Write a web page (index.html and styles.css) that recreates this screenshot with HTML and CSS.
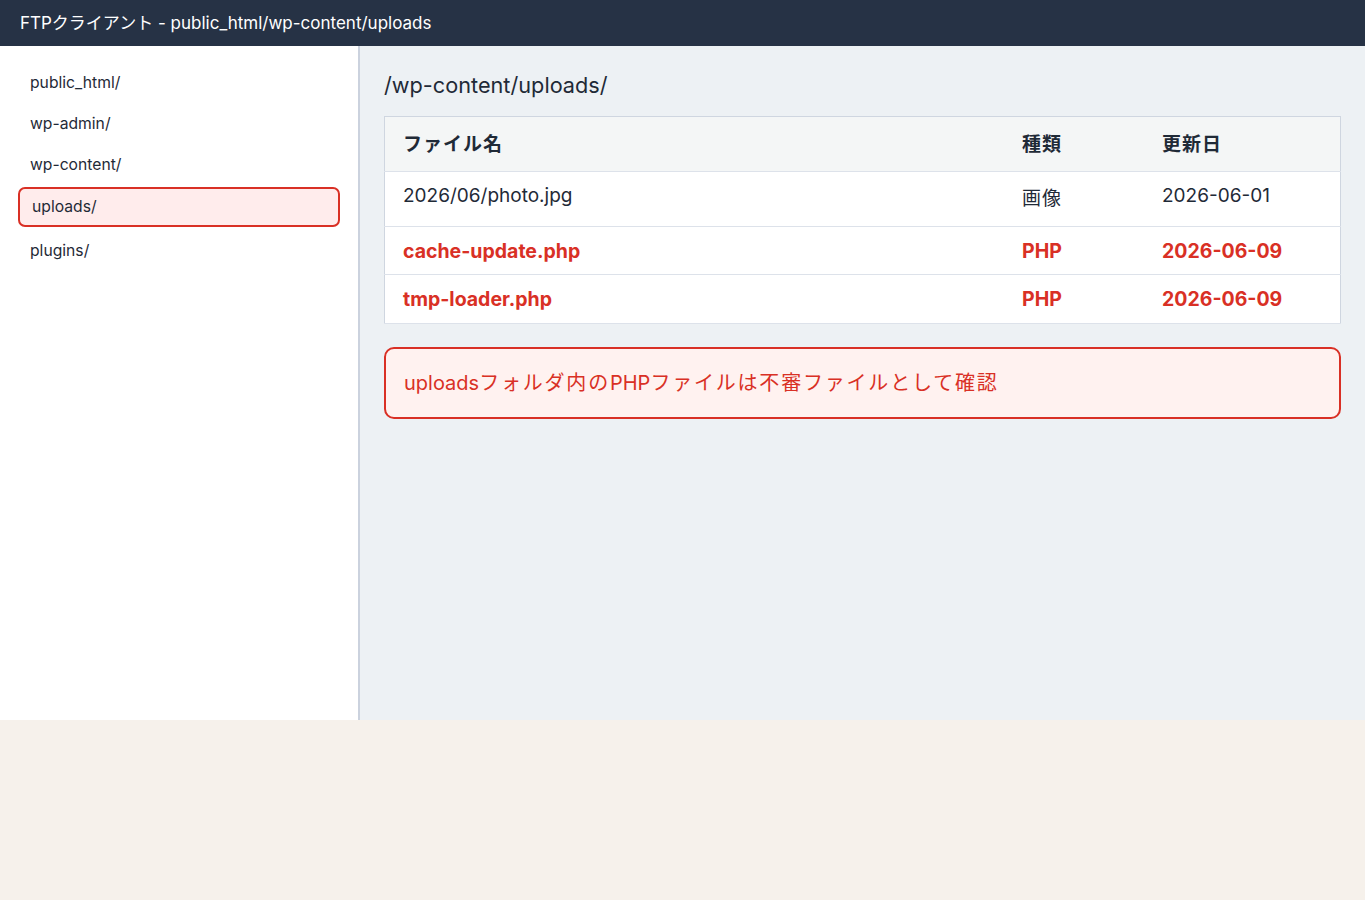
FILE: index.html
```html
<!DOCTYPE html>
<html>
<head>
  <title>FTPクライアント</title>
  <link rel="stylesheet" href="styles.css">
</head>
<body>
  <div class="app">
    <div class="topbar">FTPクライアント - public_html/wp-content/uploads</div>
    <div class="body">
      <div class="sidebar">
        <div class="folder">public_html/</div>
        <div class="folder">wp-admin/</div>
        <div class="folder">wp-content/</div>
        <div class="folder active">uploads/</div>
        <div class="folder">plugins/</div>
      </div>
      <div class="main">
        <h1 class="path">/wp-content/uploads/</h1>
        <table class="files">
          <thead>
            <tr>
              <th class="col-name">ファイル名</th>
              <th class="col-type">種類</th>
              <th>更新日</th>
            </tr>
          </thead>
          <tbody>
            <tr class="first">
              <td>2026/06/photo.jpg</td>
              <td class="kind">画像</td>
              <td>2026-06-01</td>
            </tr>
            <tr class="suspect">
              <td>cache-update.php</td>
              <td>PHP</td>
              <td>2026-06-09</td>
            </tr>
            <tr class="suspect last">
              <td>tmp-loader.php</td>
              <td>PHP</td>
              <td>2026-06-09</td>
            </tr>
          </tbody>
        </table>
        <div class="alert">uploads<span class="jp">フォルダ内の</span>PHP<span class="jp">ファイルは不審ファイルとして確認</span></div>
      </div>
    </div>
  </div>
</body>
</html>
```

FILE: styles.css
```css
body {
  font-family: Inter, "Noto Sans CJK JP", sans-serif;
  margin: 0;
  padding: 0;
  background-color: #f6f1eb;
  color: #1f2a37;
}

.app {
  height: 720px;
  display: flex;
  flex-direction: column;
}

.topbar {
  height: 46px;
  box-sizing: border-box;
  background-color: #263245;
  color: #fff;
  font-size: 17px;
  line-height: 45px;
  padding: 1px 0 0 20px;
}

.body {
  flex: 1;
  display: flex;
}

.sidebar {
  width: 360px;
  background-color: #fff;
  border-right: 2px solid #cbd2de;
  padding: 27px 18px 0 18px;
  box-sizing: border-box;
}

.folder {
  font-size: 15.7px;
  line-height: 20px;
  padding: 0 12px;
  margin-bottom: 21px;
  color: #1f2a37;
}

.folder.active {
  border: 2px solid #d93025;
  background-color: #ffecec;
  border-radius: 7px;
  padding: 8px 12px;
  margin: -9px 0 14px 0;
}

.main {
  flex: 1;
  background-color: #edf1f4;
  padding: 0 24px 0 24px;
}

.path {
  font-size: 21.7px;
  font-weight: normal;
  margin: 0;
  padding: 26px 0 0 0;
  line-height: 26px;
  color: #1f2a37;
}

.files {
  width: 100%;
  border-collapse: collapse;
  margin-top: 18px;
  background-color: #fff;
  border: 1px solid #cfd6e0;
}

.files th,
.files td {
  text-align: left;
  font-size: 19px;
  line-height: 24px;
  padding: 12px 18px;
  border-bottom: 1px solid #dde2ea;
}

.files th {
  background-color: #f4f6f6;
  font-weight: bold;
  padding-top: 16px;
  padding-bottom: 14px;
  letter-spacing: 1px;
}

.col-name {
  width: 583px;
}

.col-type {
  width: 104px;
}

.files tr.first td {
  padding-top: 12px;
  padding-bottom: 18px;
  vertical-align: top;
}

.files tr.first td.kind {
  padding-top: 15px;
  padding-bottom: 15px;
  letter-spacing: 1px;
}

.files tr.suspect td {
  color: #d93025;
  font-weight: bold;
  font-size: 19.5px;
  padding-bottom: 11px;
}

.files tr.last td {
  padding-bottom: 12px;
}

.alert {
  margin-top: 23px;
  border: 2px solid #d93025;
  border-radius: 10px;
  background-color: #fff2f0;
  color: #d93025;
  font-size: 20px;
  line-height: 28px;
  padding: 20px 18px;
}

.alert .jp {
  letter-spacing: 1.8px;
}
```
